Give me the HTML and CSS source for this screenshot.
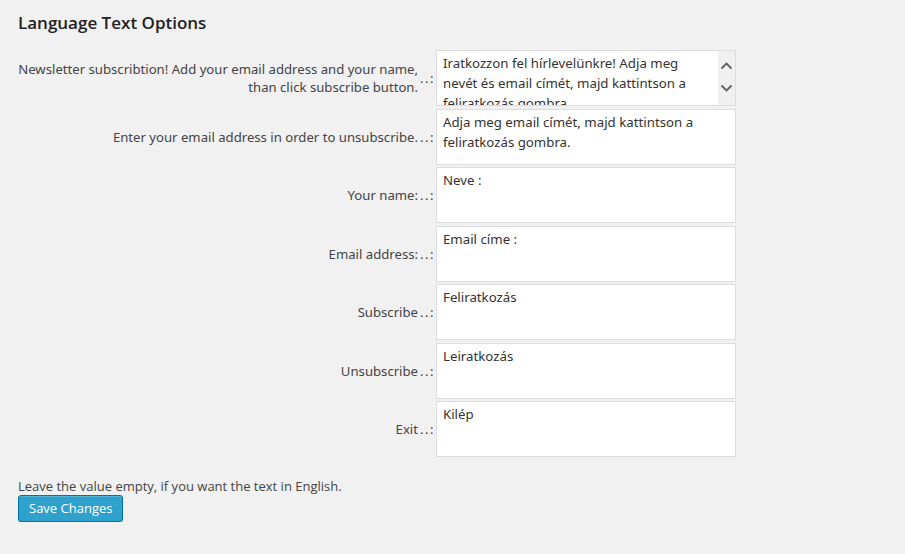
FILE: index.html
```html
<!DOCTYPE html>
<html lang="en">
<head>
<meta charset="utf-8">
<title>Language Text Options</title>
<link rel="stylesheet" href="styles.css">
</head>
<body>
<div class="wrap">
  <h3 class="title">Language Text Options</h3>
  <div class="form">
    <div class="label">Newsletter subscribtion! Add your email address and your name,<br>than click subscribe button.</div>
    <div class="sep">..:</div>
    <div class="field">
      <textarea class="ta ta-scroll">Iratkozzon fel hírlevelünkre! Adja meg nevét és email címét, majd kattintson a feliratkozás gombra.</textarea>
      <div class="fake-scroll">
        <svg width="17" height="54" viewBox="0 0 17 54"><path d="M3.5 17.5 L8.5 12.5 L13.5 17.5" fill="none" stroke="#606060" stroke-width="1.8"/><path d="M3.5 34.5 L8.5 39.5 L13.5 34.5" fill="none" stroke="#606060" stroke-width="1.8"/></svg>
      </div>
    </div>

    <div class="label">Enter your email address in order to unsubscribe.</div>
    <div class="sep">..:</div>
    <div class="field"><textarea class="ta">Adja meg email címét, majd kattintson a feliratkozás gombra.</textarea></div>

    <div class="label">Your name:</div>
    <div class="sep">..:</div>
    <div class="field"><textarea class="ta">Neve :</textarea></div>

    <div class="label">Email address:</div>
    <div class="sep">..:</div>
    <div class="field"><textarea class="ta">Email címe :</textarea></div>

    <div class="label">Subscribe</div>
    <div class="sep">..:</div>
    <div class="field"><textarea class="ta">Feliratkozás</textarea></div>

    <div class="label">Unsubscribe</div>
    <div class="sep">..:</div>
    <div class="field"><textarea class="ta">Leiratkozás</textarea></div>

    <div class="label">Exit</div>
    <div class="sep">..:</div>
    <div class="field"><textarea class="ta">Kilép</textarea></div>
  </div>
  <p class="note">Leave the value empty, if you want the text in English.</p>
  <button class="button-primary" type="button">Save Changes</button>
</div>
</body>
</html>
```
FILE: styles.css
```css
html, body {
  margin: 0;
  padding: 0;
  background: #f1f1f1;
}
body {
  font-family: "Open Sans", "Noto Sans", sans-serif;
  font-size: 13px;
  color: #444;
}
.wrap {
  padding: 11px 18px 0 18px;
}
.title {
  margin: 0;
  font-size: 17px;
  font-weight: 600;
  color: #222;
  line-height: 24px;
}
.form {
  margin-top: 15px;
  display: grid;
  grid-template-columns: 400px 18px 300px;
  row-gap: 2.5px;
}
.label {
  align-self: center;
  text-align: right;
  font-family: "Noto Sans", "Open Sans", sans-serif;
  font-size: 13.15px;
  line-height: 18px;
  color: #444;
}
.sep {
  align-self: center;
  font-family: "Noto Sans", sans-serif;
  font-size: 13px;
  letter-spacing: 1.5px;
  color: #444;
  padding-left: 2px;
}
.field {
  position: relative;
  height: 56px;
}
.ta {
  box-sizing: border-box;
  display: block;
  width: 300px;
  height: 56px;
  margin: 0;
  padding: 2px 6px;
  border: 1px solid #ddd;
  background: #fff;
  font-family: "Noto Sans", "Open Sans", sans-serif;
  font-size: 13.25px;
  line-height: 20px;
  color: #333;
  resize: none;
  overflow: hidden;
  outline: none;
}
.ta-scroll {
  padding-right: 24px;
}
.fake-scroll {
  position: absolute;
  top: 1px;
  right: 1px;
  width: 17px;
  height: 54px;
  background: #f0f0f0;
}
.fake-scroll svg {
  display: block;
}
.note {
  margin: 20px 0 0 0;
  line-height: 18px;
  font-size: 13px;
  color: #444;
}
.button-primary {
  margin-top: 0;
  height: 27px;
  padding: 0 10px 1px;
  font-family: "Open Sans", sans-serif;
  font-size: 13px;
  line-height: 24px;
  color: #fff;
  background: #2ea2cc;
  border: 1px solid #0074a2;
  border-radius: 3px;
  box-shadow: inset 0 1px 0 rgba(120, 200, 230, 0.5), 0 1px 0 rgba(0, 0, 0, 0.15);
  cursor: pointer;
}
```
